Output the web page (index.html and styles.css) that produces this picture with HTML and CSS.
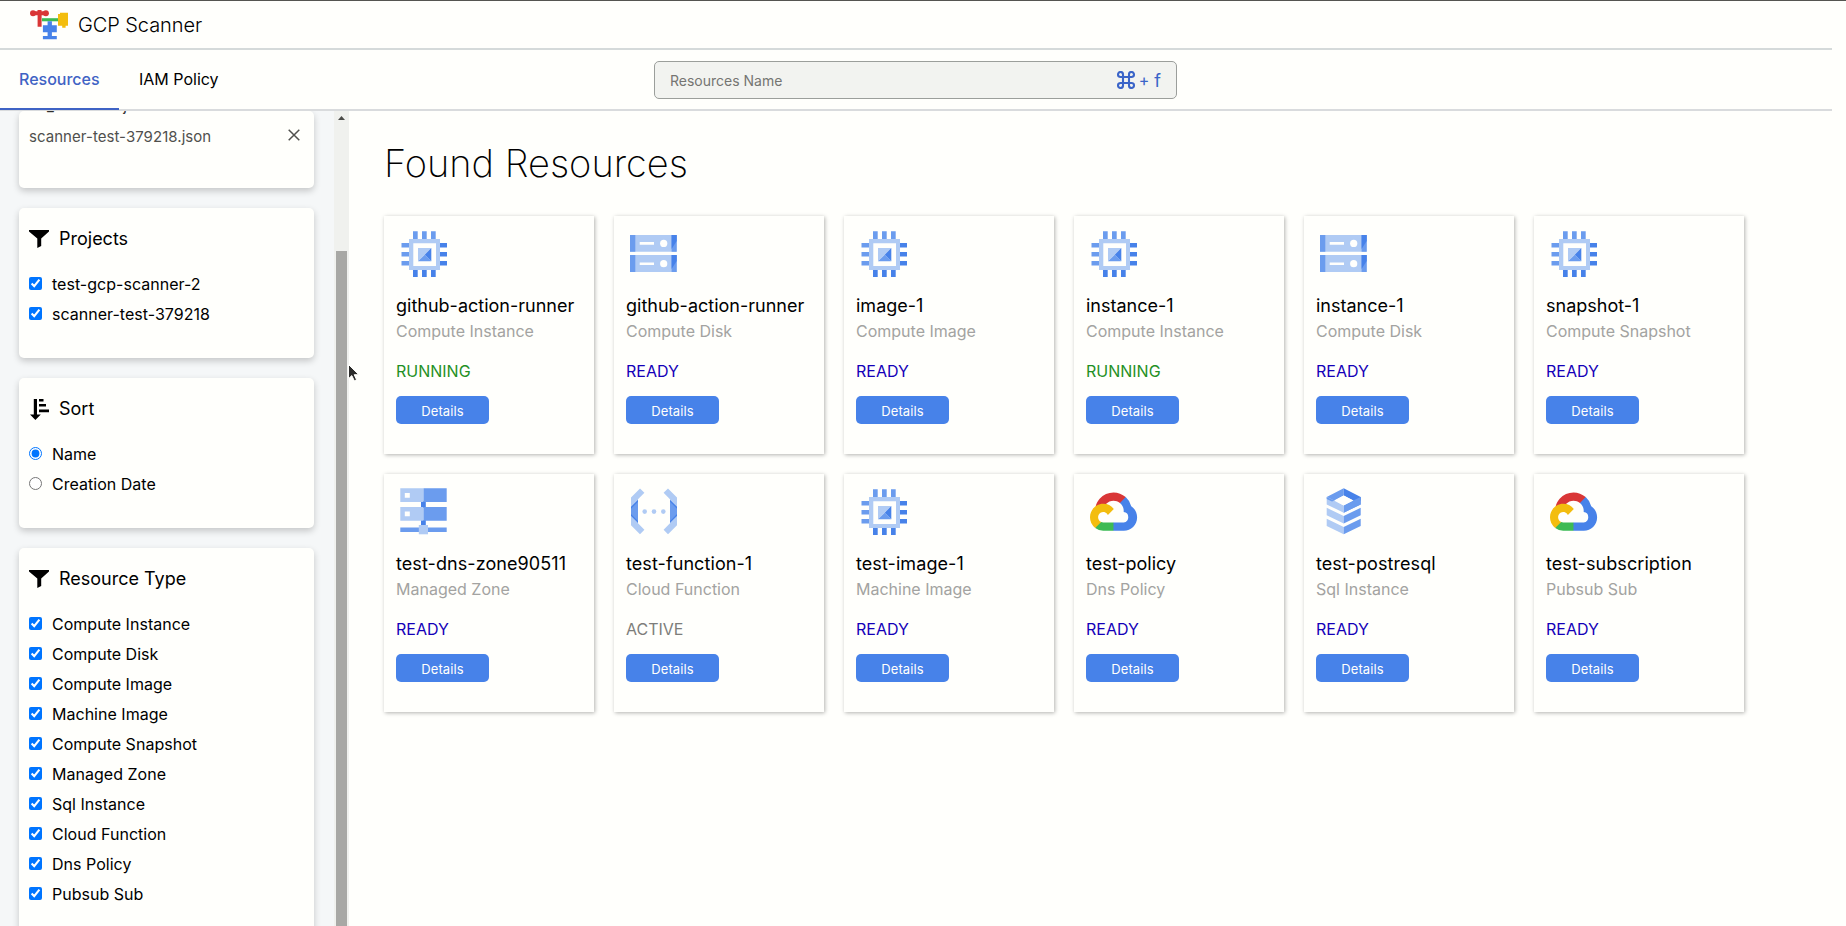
FILE: index.html
```
<!DOCTYPE html>
<html lang="en">
<head>
<meta charset="utf-8">
<title>GCP Scanner</title>
<link rel="stylesheet" href="styles.css">
</head>
<body>
<svg class="defs" aria-hidden="true">
  <symbol id="chip" viewBox="0 0 48 48">
    <path class="mid" d="M13 1.3h4.7V9H13zM22 1.3h4.7V9H22zM31 1.3h4.7V9H31zM1.5 13H9v4.5H1.5zM1.5 22H9v4.5H1.5zM1.5 31H9v4.5H1.5z"/>
    <path class="dark" d="M13 40h4.7v7H13zM22 40h4.7v7H22zM31 40h4.7v7H31zM40 13h7v4.5h-7zM40 22h7v4.5h-7zM40 31h7v4.5h-7z"/>
    <path class="light" fill-rule="evenodd" d="M9 9h31v31H9zM13.3 13.3V36H36V13.3z"/>
    <path class="light" d="M18 18h13.3L18 31.3z"/>
    <path class="mid" d="M31.3 31.3H18l6.7-6.6z"/>
    <path class="dark" d="M31.3 18v13.3l-6.6-6.6z"/>
  </symbol>
  <symbol id="disk" viewBox="0 0 48 48">
    <path class="light" d="M0 5h46.7v16.8H0zM0 25h46.7v17H0z"/>
    <path class="mid" d="M0 5h5.3v16.8H0zM0 25h5.3v17H0zM41.6 5h5.1v16.8h-5.1zM41.6 25h5.1v17h-5.1z"/>
    <path class="dark" d="M41.6 5h5.1v6l-5.1 8zM41.6 25h5.1v6l-5.1 8z"/>
    <path class="hole" d="M9.7 12h14.3v2.7H9.7zM9.7 32.4h14.3v2.7H9.7z"/>
    <circle class="hole" cx="33.7" cy="13.4" r="3.6"/><circle class="hole" cx="33.7" cy="33.7" r="3.6"/>
  </symbol>
  <symbol id="zone" viewBox="0 0 48 48">
    <path class="dark" d="M21 13h4.8v7H21zM21 32h4.8v6H21z"/>
    <path class="light" d="M.3.3h23.2V14H.3zM.3 19h23.2v13.7H.3z"/>
    <path class="mid" d="M23.5.3h23.2V14H23.5zM23.5 19h23.2v13.7H23.5zM.3 39.6h46.4V44H.3z"/>
    <path class="light" d="M18.8 37H28v9.3h-9.2z"/>
    <path class="hole" d="M4.8 5h5v4.8h-5zM4.8 23.5h5v4.8h-5z"/>
  </symbol>
  <symbol id="func" viewBox="0 0 48 48">
    <path class="light" d="M10 .5l4.4 4.3L8 11.3v23.9l6.4 6.5-4.4 4.5-9-9V9.6zM38 .5l-4.4 4.3 6.4 6.5v23.9l-6.4 6.5 4.4 4.5 9-9V9.6z"/>
    <path class="mid" d="M8 12v22.8l-7-7v-9zM40 12v22.8l7-7v-9z"/>
    <path class="dark" d="M8 12v1.8l-7 7V19zM8 34.8V33l-7-7v1.8zM40 12v1.8l7 7V19zM40 34.8V33l7-7v1.8z"/>
    <circle class="light" cx="14.7" cy="23.6" r="2.3"/><circle class="light" cx="24" cy="23.6" r="2.3"/><circle class="light" cx="33.3" cy="23.6" r="2.3"/>
  </symbol>
  <symbol id="sql" viewBox="0 0 48 48">
    <path class="mid" d="M6.7 9L23.7.3v7.2l-9.4 5.1 9.4 5v7.1l17-8.3V9l-7.4 3.6-9.6 5z"/>
    <path class="dark" d="M23.7.3l17 8.7v3.5l-4.3 1.8-3.1-1.7-9.6-5.1z"/>
    <path class="mid" d="M33.3 12.6L40.7 9v7.4l-17 8.3v-7.1z"/>
    <path class="light" d="M6.7 9l17 8.6v7.1l-17-8.3zM6.7 19.8l17 8.2v7.4l-17-8.2zM6.7 30.7l17 8.2v7.4l-17-8.2z"/>
    <path class="mid" d="M6.7 9l7.6 3.6-2.3 1-5.3-2.7zM40.7 19.8l-17 8.2v7.4l17-8.2zM40.7 30.7l-17 8.2v7.4l17-8.2z"/>
    <path class="hole" d="M14.3 12.6l9.4-5.1 9.6 5.1-9.6 5z"/>
  </symbol>
  <symbol id="cloud" viewBox="0 0 48 48">
    <g transform="translate(0 4.4) scale(.184 .186)">
      <path class="red" d="M170.25 56.82l22.25-22.25 1.49-9.37C153.44-11.68 88.98-7.5 52.42 33.92 42.27 45.42 34.73 59.76 30.72 74.57l7.97-1.12 44.5-7.34 3.44-3.51c19.8-21.75 53.27-24.67 76.13-6.17z"/>
      <path class="dark" d="M224.2 73.92a100.25 100.25 0 0 0-30.21-48.72l-31.23 31.23a55.52 55.52 0 0 1 20.37 44.04v5.54a27.8 27.8 0 0 1 0 55.28h-55.67l-5.46 5.93v33.34l5.46 5.23h55.67c39.93.31 72.56-31.49 72.87-71.42.19-24.2-11.75-46.89-31.8-60.45"/>
      <path class="green" d="M71.87 205.8h55.59v-44.51H71.87c-3.96 0-7.8-.85-11.4-2.5l-7.89 2.42-22.4 22.25-1.96 7.58a72.2 72.2 0 0 0 43.65 14.76"/>
      <path class="yellow" d="M71.87 61.43C31.94 61.66-.24 94.23 0 134.16a72.3 72.3 0 0 0 28.22 56.88l32.25-32.25c-13.99-6.32-20.21-22.78-13.89-36.77 6.33-13.99 22.79-20.21 36.78-13.89a27.9 27.9 0 0 1 13.89 13.89l32.24-32.25a72.15 72.15 0 0 0-57.62-28.34"/>
    </g>
  </symbol>
  <symbol id="filter" viewBox="0 0 20 18"><path d="M0 0h20v1.6L12.2 8.6V16l-3.9 2V8.6L0 1.6z"/></symbol>
</svg>

<header class="header">
  <svg class="logo" viewBox="0 0 40 32">
    <path class="green" d="M12 9.2h17v3.1H12z"/>
    <path class="red" d="M3 2.2h4.5V1h4v1.2H16v4h-4.4v11.6h-4V6.2H3z"/>
    <circle class="red" cx="3" cy="4.3" r="3"/><circle class="red" cx="15.9" cy="4.3" r="3"/>
    <path class="yellow" d="M28 5h2V3.8h8v13h-2.4v2h-3.4v-2H28z"/>
    <path class="dark" d="M17.6 12.3h4.3v4h4.9v7h-4.9v3.6h4.9v3.3H12.9v-3.3h4.7v-3.6h-4.7v-7h4.7z"/>
  </svg>
  <span class="brand">GCP Scanner</span>
</header>
<nav class="nav">
  <div class="tabs">
    <a class="tab active">Resources</a>
    <a class="tab policy">IAM Policy</a>
  </div>
  <div class="search">
    <span class="placeholder">Resources Name</span>
    <span class="shortcut">
      <svg class="cmd" viewBox="0 0 18 18"><path d="M6 6V3.5A2.5 2.5 0 1 0 3.5 6h11A2.5 2.5 0 1 0 12 3.5v11a2.5 2.5 0 1 0 2.5-2.5h-11A2.5 2.5 0 1 0 6 14.5z"/></svg>
      <span>+</span><span class="key">f</span>
    </span>
  </div>
</nav>

<div class="body">
  <aside class="sidebar">
    <div class="panels">
      <section class="panel files">
        <div class="file cut"><span>20_10-02-06.json</span></div>
        <div class="file"><span>scanner-test-379218.json</span>
          <svg class="close" viewBox="0 0 12 12"><path d="M.7.7l10.6 10.6M11.3.7L.7 11.3"/></svg></div>
      </section>
      <section class="panel">
        <h2><svg class="filter"><use href="#filter"/></svg>Projects</h2>
        <label><input type="checkbox" checked>test-gcp-scanner-2</label>
        <label><input type="checkbox" checked>scanner-test-379218</label>
      </section>
      <section class="panel">
        <h2><svg class="sort" viewBox="0 0 20 22"><path d="M4.8 1h3.2v15.6h3.8L6.4 22 1 16.6h3.8zM10 1h4.5v2.6H10zM10 6h7v2.6h-7zM10 11.6h10v2.6H10z"/></svg>Sort</h2>
        <label><input type="radio" name="sort" checked>Name</label>
        <label><input type="radio" name="sort">Creation Date</label>
      </section>
      <section class="panel">
        <h2><svg class="filter"><use href="#filter"/></svg>Resource Type</h2>
        <label><input type="checkbox" checked>Compute Instance</label>
        <label><input type="checkbox" checked>Compute Disk</label>
        <label><input type="checkbox" checked>Compute Image</label>
        <label><input type="checkbox" checked>Machine Image</label>
        <label><input type="checkbox" checked>Compute Snapshot</label>
        <label><input type="checkbox" checked>Managed Zone</label>
        <label><input type="checkbox" checked>Sql Instance</label>
        <label><input type="checkbox" checked>Cloud Function</label>
        <label><input type="checkbox" checked>Dns Policy</label>
        <label><input type="checkbox" checked>Pubsub Sub</label>
      </section>
    </div>
    <div class="scrollbar">
      <svg class="arrow" viewBox="0 0 7 4"><path d="M0 4L3.5 0 7 4z"/></svg>
      <div class="thumb"></div>
    </div>
  </aside>

  <main class="main">
    <h1>Found Resources</h1>
    <div class="grid">
      <article class="card"><svg class="icon"><use href="#chip"/></svg><h3>github-action-runner</h3><p class="type">Compute Instance</p><p class="status running">RUNNING</p><button>Details</button></article>
      <article class="card"><svg class="icon"><use href="#disk"/></svg><h3>github-action-runner</h3><p class="type">Compute Disk</p><p class="status">READY</p><button>Details</button></article>
      <article class="card"><svg class="icon"><use href="#chip"/></svg><h3>image-1</h3><p class="type">Compute Image</p><p class="status">READY</p><button>Details</button></article>
      <article class="card"><svg class="icon"><use href="#chip"/></svg><h3>instance-1</h3><p class="type">Compute Instance</p><p class="status running">RUNNING</p><button>Details</button></article>
      <article class="card"><svg class="icon"><use href="#disk"/></svg><h3>instance-1</h3><p class="type">Compute Disk</p><p class="status">READY</p><button>Details</button></article>
      <article class="card"><svg class="icon"><use href="#chip"/></svg><h3>snapshot-1</h3><p class="type">Compute Snapshot</p><p class="status">READY</p><button>Details</button></article>
      <article class="card"><svg class="icon"><use href="#zone"/></svg><h3 class="wide">test-dns-zone90511</h3><p class="type">Managed Zone</p><p class="status">READY</p><button>Details</button></article>
      <article class="card"><svg class="icon"><use href="#func"/></svg><h3 class="wide">test-function-1</h3><p class="type">Cloud Function</p><p class="status other">ACTIVE</p><button>Details</button></article>
      <article class="card"><svg class="icon"><use href="#chip"/></svg><h3 class="wide">test-image-1</h3><p class="type">Machine Image</p><p class="status">READY</p><button>Details</button></article>
      <article class="card"><svg class="icon"><use href="#cloud"/></svg><h3>test-policy</h3><p class="type">Dns Policy</p><p class="status">READY</p><button>Details</button></article>
      <article class="card"><svg class="icon"><use href="#sql"/></svg><h3 class="wide">test-postresql</h3><p class="type">Sql Instance</p><p class="status">READY</p><button>Details</button></article>
      <article class="card"><svg class="icon"><use href="#cloud"/></svg><h3 class="wide">test-subscription</h3><p class="type">Pubsub Sub</p><p class="status">READY</p><button>Details</button></article>
    </div>
  </main>
</div>
<svg class="cursor" viewBox="0 0 12 18"><path d="M.5.5v14.2l3.3-3.1 2.5 5.2 2.3-1-2.4-5.1h4.6z"/></svg>
</body>
</html>
```

FILE: styles.css
```
* { box-sizing: border-box; }
body {
  margin: 0;
  height: 926px;
  overflow: hidden;
  display: flex;
  flex-direction: column;
  background: #fffffc;
  border-top: 1px solid #555551;
  color: #000;
  font-family: Inter, "Liberation Sans", sans-serif;
  font-size: 16px;
}
h1, h2, h3, p { margin: 0; font-weight: 400; }
.defs { display: none; }
.light { fill: #b0cbf4; }
.mid { fill: #6b9cee; }
.dark { fill: #4782e9; }
.hole { fill: #fffffc; }
.red { fill: #d93636; }
.green { fill: #3dba54; }
.yellow { fill: #f3bd0e; }

.header {
  width: 1832px;
  height: 49px;
  display: flex;
  align-items: center;
  gap: 8px;
  padding: 0 0 0 30px;
  border-bottom: 2px solid #d5dada;
}
.logo { width: 40px; height: 32px; }
.brand { font-size: 20px; font-weight: 300; line-height: 30px; letter-spacing: -.08px; }

.nav {
  width: 1832px;
  height: 61px;
  flex: none;
  display: flex;
  align-items: flex-start;
  border-bottom: 2px solid #d9dbdd;
}
.tabs { display: flex; width: 654px; height: 60px; }
.tab { line-height: 58px; height: 60px; }
.active { width: 119px; padding-left: 19px; color: #3f63c4; border-bottom: 2px solid #3f63c4; font-weight: 500; }
.policy { padding-left: 20px; }
.search {
  width: 523px;
  height: 38px;
  margin-top: 11px;
  padding: 0 15px;
  display: flex;
  align-items: center;
  justify-content: space-between;
  background: #f2f3f0;
  border: 1px solid #9b9e9b;
  border-radius: 5px;
}
.placeholder { font-size: 14px; color: #757572; }
.shortcut { display: flex; align-items: center; gap: 4px; color: #3a64c8; }
.key { margin-left: 1px; font-size: 18px; }
.cmd { width: 18px; height: 18px; fill: none; stroke: #3a64c8; stroke-width: 2.1; }

.body { flex: 1; display: flex; min-height: 0; }
.sidebar { width: 349px; display: flex; background: #f5f7f8; overflow: hidden; }
.panels { width: 334px; padding-left: 19px; display: flex; flex-direction: column; gap: 20px; }
.panel {
  width: 295px;
  flex: none;
  padding: 15px 10px 29px;
  background: #fffffc;
  border-radius: 5px;
  box-shadow: 0 3px 7px rgba(0, 0, 0, .2);
}
.files { height: 77px; padding-top: 0; color: #50504d; font-size: 15px; letter-spacing: .05px; }
.file { display: flex; justify-content: space-between; height: 30px; line-height: 30px; padding-right: 4px; margin-top: 1px; }
.cut { margin-top: -20px; color: #2f2f2d; }
.close { width: 12px; height: 12px; margin-top: 7px; fill: none; stroke: #50504d; stroke-width: 1.5; }
h2 { display: flex; align-items: center; gap: 10px; height: 31px; margin-bottom: 15px; font-size: 18px; }
.filter { width: 20px; height: 18px; }
.sort { width: 20px; height: 22px; }
label { display: flex; align-items: center; gap: 10px; height: 30px; line-height: 30px; letter-spacing: .02px; }
input { width: 13px; height: 13px; margin: 0 0 2px; }
.scrollbar { width: 15px; display: flex; flex-direction: column; align-items: center; background: #f0f1ee; }
.arrow { width: 7px; height: 4px; margin-top: 5px; fill: #4b4b48; }
.thumb { width: 11px; flex: 1; margin-top: 131px; background: #a8a8a5; }

.main { padding: 25px 0 0 35px; }
h1 { height: 80px; font-size: 38px; line-height: 54px; font-weight: 200; }
.grid { display: grid; grid-template-columns: repeat(6, 210px); gap: 20px; }
.card {
  height: 238px;
  padding: 14px 12px;
  display: flex;
  flex-direction: column;
  align-items: flex-start;
  box-shadow: 1px 1px 4px rgba(0, 0, 0, .3);
}
.icon { width: 48px; height: 48px; margin-left: 4px; flex: none; }
h3 { margin-top: 15px; font-size: 18px; line-height: 26px; white-space: nowrap; }
.wide { letter-spacing: .08px; }
.type { margin-top: -1px; line-height: 26px; color: #a3a3a1; }
.status { margin-top: 14px; line-height: 26px; color: #1400b8; }
.running { color: #1f9025; }
.other { color: #7d7d7a; }
button {
  width: 93px;
  height: 28px;
  margin-top: 12px;
  padding: 1px 0 0;
  border: 0;
  border-radius: 5px;
  background: #4782e9;
  color: #fffffc;
  font: 400 13px Inter, "Liberation Sans", sans-serif;
  letter-spacing: .1px;
}
.cursor { position: absolute; left: 348px; top: 364px; width: 12px; height: 18px; fill: #2b2b2a; stroke: #fffffc; stroke-width: 1; }
```
